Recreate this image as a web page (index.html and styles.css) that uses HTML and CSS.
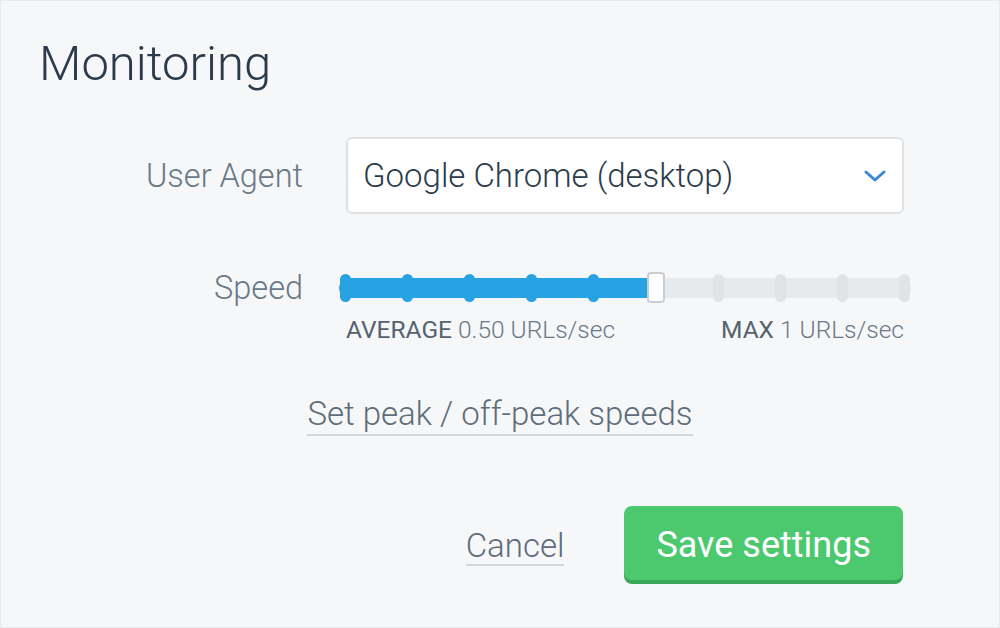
FILE: index.html
```html
<!DOCTYPE html>
<html>
	<head>
		<meta charset="utf-8" />
		<title>Monitoring</title>
		<link rel="stylesheet" href="styles.css">
	</head>
	<body>
		<div class="card">
			<h1 class="title">Monitoring</h1>

			<div class="form">
				<!-- user agent -->
				<div class="row">
					<label class="label">User Agent</label>
					<div class="select">
						<span class="select_value">Google Chrome (desktop)</span>
						<svg class="chevron" width="22" height="12" viewBox="0 0 22 12">
							<path d="M2 2 L11 10 L20 2" fill="none" stroke="#3b86d6" stroke-width="3" stroke-linecap="round" stroke-linejoin="round"/>
						</svg>
					</div>
				</div>

				<!-- speed -->
				<div class="row row_speed">
					<label class="label label_speed">Speed</label>
					<div class="speed">
						<div class="slider">
							<div class="slider_fill" style="width: 55.5%"></div>
							<div class="ticks">
								<span class="tick on"></span>
								<span class="tick on"></span>
								<span class="tick on"></span>
								<span class="tick on"></span>
								<span class="tick on"></span>
								<span class="tick on"></span>
								<span class="tick"></span>
								<span class="tick"></span>
								<span class="tick"></span>
								<span class="tick"></span>
							</div>
							<div class="handle" style="left: 55.5%"></div>
						</div>
						<div class="legend">
							<span><b>AVERAGE</b> 0.50 URLs/sec</span>
							<span><b>MAX</b> 1 URLs/sec</span>
						</div>
					</div>
				</div>
			</div>

			<div class="peak">
				<a class="link link_peak" href="#">Set peak / off-peak speeds</a>
			</div>

			<div class="actions">
				<a class="link link_cancel" href="#">Cancel</a>
				<button class="btn_save">Save settings</button>
			</div>
		</div>
	</body>
</html>
```

FILE: styles.css
```css
html, body {
	margin: 0;
	padding: 0;
}
body {
	font-family: Roboto, "Liberation Sans", sans-serif;
	font-weight: 300;
	background-color: #f5f7f9;
}
.card {
	box-sizing: border-box;
	width: 1000px;
	height: 628px;
	border: 1px solid #e8ebee;
	background-color: #f5f7f9;
	padding: 35px 96px 0 40px;
}
.title {
	margin: 0 0 0 -2px;
	font-size: 49px;
	font-weight: 300;
	line-height: 56px;
	color: #2c3b4b;
}

/** form **/
.form {
	margin-top: 45px;
}
.row {
	display: grid;
	grid-template-columns: 262px 558px;
	column-gap: 43px;
	align-items: center;
}
.row_speed {
	align-items: start;
	margin-top: 58px;
}
.label {
	text-align: right;
	font-size: 32.5px;
	color: #6b7886;
}
.label_speed {
	line-height: 32px;
}
.select {
	box-sizing: border-box;
	height: 77px;
	display: flex;
	align-items: center;
	justify-content: space-between;
	padding: 0 16px 0 15px;
	background-color: #fff;
	border: 2px solid #dfe2e5;
	border-radius: 6px;
}
.select_value {
	font-size: 33px;
	color: #2c3b4b;
}
.chevron {
	display: block;
}

/** slider **/
.slider {
	position: relative;
	height: 32px;
	margin: 0 -7px;
}
.slider::before {
	content: '';
	position: absolute;
	left: 0;
	right: 0;
	top: 6px;
	height: 20px;
	border-radius: 10px;
	background-color: #e7eaed;
}
.slider_fill {
	position: absolute;
	left: 0;
	top: 6px;
	height: 20px;
	border-radius: 10px 0 0 10px;
	background-color: #27a2e2;
}
.ticks {
	position: relative;
	height: 32px;
	padding: 0 1px;
	display: flex;
	justify-content: space-between;
	align-items: center;
}
.tick {
	width: 11px;
	height: 28px;
	border-radius: 6px;
	background-color: #e1e4e7;
}
.tick.on {
	background-color: #27a2e2;
}
.handle {
	position: absolute;
	top: 0;
	width: 18px;
	height: 31px;
	margin-left: -9px;
	box-sizing: border-box;
	background-color: #fff;
	border: 2px solid #cbcdd0;
	border-radius: 4px;
}
.legend {
	display: flex;
	justify-content: space-between;
	margin-top: 12px;
	font-size: 24.5px;
	line-height: 28px;
	color: #6b7886;
}
.legend b {
	font-weight: 400;
	color: #56626f;
}

/** links **/
.link {
	text-decoration: none;
	color: #5f6c7a;
	border-bottom: 2px solid #d3d7db;
}
.peak {
	margin: 52px -96px 0 -40px;
	text-align: center;
	line-height: 36px;
}
.link_peak {
	display: inline-block;
	font-size: 33px;
	line-height: 36px;
	padding-bottom: 2px;
}

.actions {
	margin-top: 68px;
	display: flex;
	justify-content: flex-end;
	align-items: center;
	gap: 60px;
}
.link_cancel {
	display: inline-block;
	font-size: 33px;
	line-height: 36px;
	margin-top: 8px;
}
.btn_save {
	height: 74px;
	padding: 3px 32px 0;
	border: none;
	border-radius: 8px;
	background-color: #4cc96e;
	box-shadow: 0 4px 0 #3aa85a;
	color: #fff;
	font-family: Roboto, "Liberation Sans", sans-serif;
	font-weight: 400;
	font-size: 36px;
	cursor: pointer;
}
```
